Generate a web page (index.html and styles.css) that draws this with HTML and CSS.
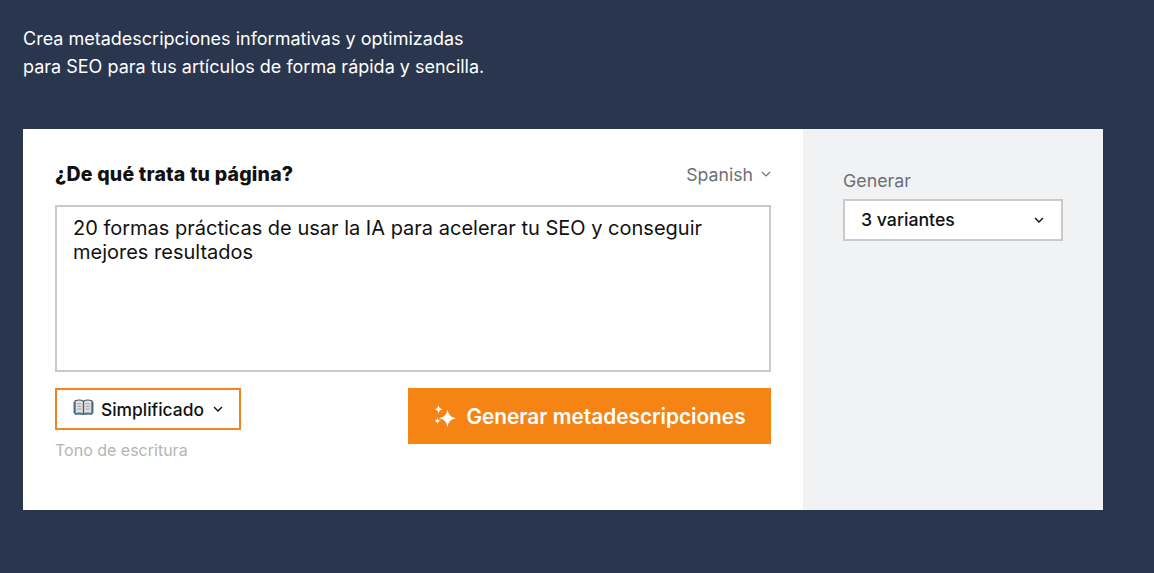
FILE: index.html
```html
<!DOCTYPE html>
<html lang="es">
<head>
<meta charset="utf-8">
<title>Metadescripciones</title>
<link rel="stylesheet" href="styles.css">
</head>
<body>
<p class="intro">Crea metadescripciones informativas y optimizadas<br>para SEO para tus artículos de forma rápida y sencilla.</p>
<section class="card">
  <div class="main">
    <div class="head">
      <h2 class="title">¿De qué trata tu página?</h2>
      <div class="lang">Spanish
        <svg class="chev-sm" viewBox="0 0 10 6" width="10" height="6"><path d="M1 1l4 4 4-4" fill="none" stroke="#6b7075" stroke-width="1.2"/></svg>
      </div>
    </div>
    <div class="textbox">20 formas prácticas de usar la IA para acelerar tu SEO y conseguir mejores resultados</div>
    <div class="actions">
      <div class="tone-col">
        <div class="tone"><span class="book">
          <svg viewBox="0 0 20 16" width="21" height="17">
            <path d="M0.500 13.500V2.500h1.500V15h16V2.500h1.500v11z" fill="#3f78a3"/>
            <path d="M2 1.500C5 .5 8 .7 10 2c2-1.300 5-1.500 8-.5V14c-3-1-6-.8-8 .5-2-1.300-5-1.500-8-.5z" fill="#dfe2e5" stroke="#4d5459" stroke-width="1"/>
            <path d="M10 2v12.500" stroke="#4d5459" stroke-width="1.200" fill="none"/>
            <path d="M4 4.500h4M4 7h4M4 9.500h4M12 4.500h4M12 7h4M12 9.500h4" stroke="#9ba1a6" stroke-width=".9" fill="none"/>
          </svg></span>Simplificado
          <svg class="chev" viewBox="0 0 10 6" width="10" height="6"><path d="M1 1l4 4 4-4" fill="none" stroke="#111" stroke-width="1.4"/></svg>
        </div>
        <div class="tone-label">Tono de escritura</div>
      </div>
      <button class="generate" type="button">
        <svg viewBox="0 0 24 24" width="24" height="24"><path d="M14.500 5.500c1 5.200 3.300 7.800 8.500 8.800-5.200 1-7.500 3.500-8.500 8.700-1-5.200-3.300-7.700-8.500-8.700 5.200-1 7.500-3.600 8.500-8.800zM5.500 1c.5 2.800 1.500 3.800 4.200 4.300-2.700.5-3.700 1.500-4.200 4.200-.5-2.700-1.500-3.700-4.200-4.200C4 4.800 5 3.800 5.500 1zM4.500 13.500c.4 2 1.200 2.900 3.200 3.300-2 .4-2.800 1.200-3.200 3.200-.4-2-1.200-2.800-3.200-3.200 2-.4 2.800-1.300 3.200-3.300z" fill="#fff"/></svg>
        Generar metadescripciones
      </button>
    </div>
  </div>
  <aside class="side">
    <div class="side-label">Generar</div>
    <div class="variants">3 variantes
      <svg viewBox="0 0 10 6" width="10" height="6"><path d="M1 1l4 4 4-4" fill="none" stroke="#111" stroke-width="1.4"/></svg>
    </div>
  </aside>
</section>
</body>
</html>
```
FILE: styles.css
```css
* { box-sizing: border-box; }
html, body { height: 100%; }
body {
  margin: 0;
  background: #2a364d;
  font-family: Inter, "Liberation Sans", sans-serif;
  padding: 25px 51px 0 23px;
  overflow: hidden;
}
.intro {
  margin: 0 0 48px;
  color: #fff;
  font-size: 18px;
  line-height: 28px;
}
.card {
  display: flex;
  width: 1080px;
  height: 381px;
  background: #fff;
}
.main {
  width: 780px;
  padding: 31px 32px 0;
}
.head {
  display: flex;
  justify-content: space-between;
  align-items: center;
  height: 28px;
  margin-bottom: 17px;
}
.title {
  margin: 0;
  font-size: 19.500px;
  font-weight: 800;
  color: #111;
  letter-spacing: .2px;
}
.lang {
  display: flex;
  align-items: center;
  gap: 8px;
  font-size: 17.700px;
  color: #6b7075;
}
.textbox {
  height: 167px;
  border: 2px solid #c9c9c9;
  padding: 9px 16px;
  font-size: 20px;
  line-height: 24px;
  color: #111;
}
.actions {
  display: flex;
  justify-content: space-between;
  align-items: flex-start;
  margin-top: 16px;
}
.tone {
  display: flex;
  align-items: center;
  width: 186px;
  height: 42px;
  border: 2px solid #f5841f;
  padding-left: 16px;
  font-size: 17.400px;
  font-weight: 500;
  color: #111;
}
.book { display: flex; margin: -4px 7px 0 0; }
.chev { margin-left: 9px; }
.tone-label {
  margin-top: 10px;
  font-size: 16px;
  line-height: 20px;
  color: #b5b5b5;
}
.generate {
  display: flex;
  align-items: center;
  justify-content: center;
  gap: 9px;
  width: 363px;
  height: 56px;
  border: 0;
  background: #f58415;
  color: #fff;
  font-family: inherit;
  font-size: 20.800px;
  font-weight: 600;
}
.side {
  width: 300px;
  background: #f1f2f4;
  padding: 41px 40px 0;
}
.side-label {
  font-size: 17.800px;
  line-height: 22px;
  color: #6b7075;
  margin-bottom: 7px;
}
.variants {
  display: flex;
  align-items: center;
  justify-content: space-between;
  width: 220px;
  height: 42px;
  background: #fff;
  border: 2px solid #c9c9c9;
  padding: 0 17px 1px 16px;
  font-size: 17.700px;
  font-weight: 500;
  color: #111;
}
```
